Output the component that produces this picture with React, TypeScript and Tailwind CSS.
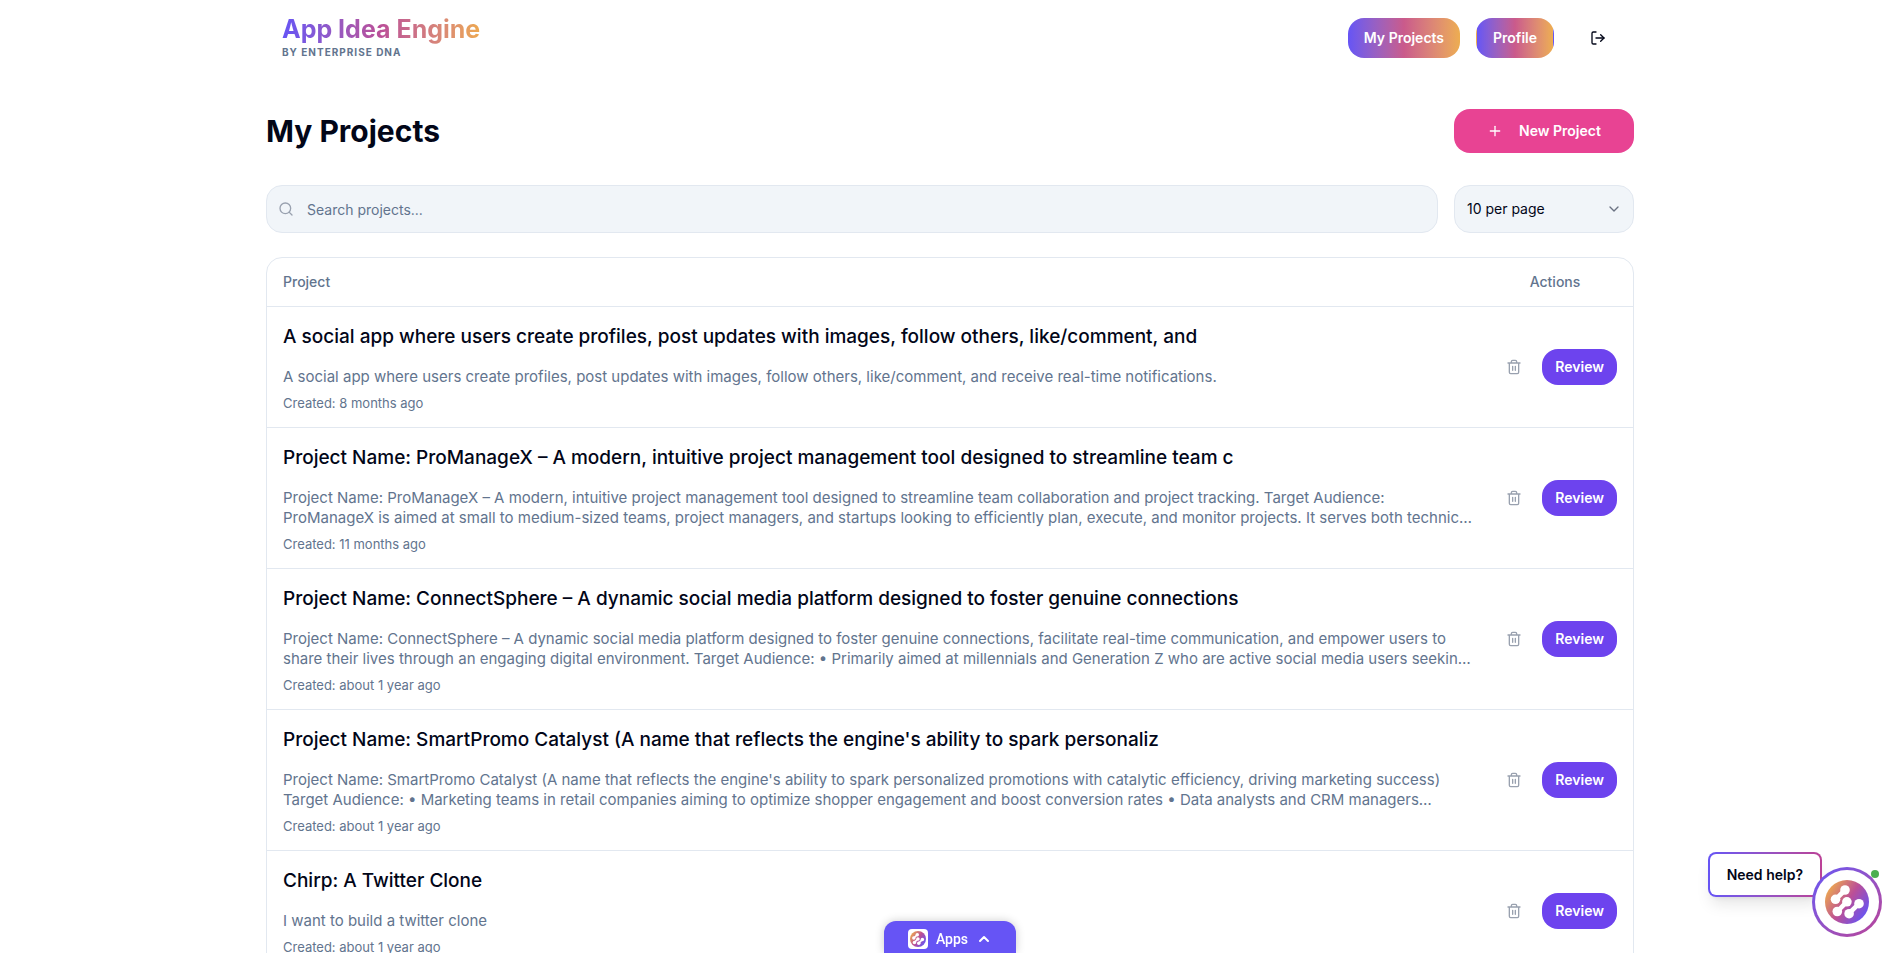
import { ChevronDown, ChevronUp, LogOut, Plus, Search } from "lucide-react";

interface Project {
	title: string;
	lines: string[];
	created: string;
}

const projects: Project[] = [
	{
		title:
			"A social app where users create profiles, post updates with images, follow others, like/comment, and",
		lines: [
			"A social app where users create profiles, post updates with images, follow others, like/comment, and receive real-time notifications.",
		],
		created: "8 months ago",
	},
	{
		title:
			"Project Name: ProManageX – A modern, intuitive project management tool designed to streamline team c",
		lines: [
			"Project Name: ProManageX – A modern, intuitive project management tool designed to streamline team collaboration and project tracking. Target Audience:",
			"ProManageX is aimed at small to medium-sized teams, project managers, and startups looking to efficiently plan, execute, and monitor projects. It serves both technic…",
		],
		created: "11 months ago",
	},
	{
		title:
			"Project Name: ConnectSphere – A dynamic social media platform designed to foster genuine connections",
		lines: [
			"Project Name: ConnectSphere – A dynamic social media platform designed to foster genuine connections, facilitate real-time communication, and empower users to",
			"share their lives through an engaging digital environment. Target Audience: • Primarily aimed at millennials and Generation Z who are active social media users seekin…",
		],
		created: "about 1 year ago",
	},
	{
		title:
			"Project Name: SmartPromo Catalyst (A name that reflects the engine's ability to spark personaliz",
		lines: [
			"Project Name: SmartPromo Catalyst (A name that reflects the engine's ability to spark personalized promotions with catalytic efficiency, driving marketing success)",
			"Target Audience: • Marketing teams in retail companies aiming to optimize shopper engagement and boost conversion rates • Data analysts and CRM managers…",
		],
		created: "about 1 year ago",
	},
	{
		title: "Chirp: A Twitter Clone",
		lines: ["I want to build a twitter clone"],
		created: "about 1 year ago",
	},
];

const TrashIcon = () => (
	<svg
		viewBox="0 0 24 24"
		className="size-4"
		fill="none"
		stroke="currentColor"
		strokeWidth="2"
		strokeLinecap="round"
		strokeLinejoin="round"
		aria-hidden="true"
	>
		<path d="M3 6h18M19 6v14a2 2 0 0 1-2 2H7a2 2 0 0 1-2-2V6M8 6V4a2 2 0 0 1 2-2h4a2 2 0 0 1 2 2v2M10 11v6M14 11v6" />
	</svg>
);

const DnaLogo = ({ id, className }: { id: string; className: string }) => (
	<svg viewBox="0 0 44 44" className={className} aria-hidden="true">
		<defs>
			<linearGradient id={id} x1="0.05" y1="0.2" x2="0.95" y2="0.8">
				<stop offset="0" stopColor="#eda84f" />
				<stop offset="0.5" stopColor="#bb4f97" />
				<stop offset="1" stopColor="#6654f5" />
			</linearGradient>
		</defs>
		<circle cx="22" cy="22" r="22" fill={`url(#${id})`} />
		<path
			d="M20 10L10.7 19.3M21.7 21.8L12.3 31.5M34 23.7L23.9 33.5"
			fill="none"
			stroke="#fff"
			strokeWidth="4.6"
		/>
		<g fill="#fff">
			<circle cx="20" cy="10" r="4.8" />
			<circle cx="10.5" cy="19.3" r="4.8" />
			<circle cx="21.9" cy="21.8" r="4.8" />
			<circle cx="12.3" cy="31.5" r="4.8" />
			<circle cx="34" cy="23.7" r="4.8" />
			<circle cx="24.1" cy="33.7" r="4.8" />
		</g>
	</svg>
);

const Header = () => (
	<header className="flex items-center justify-between px-4 pt-[15px]">
		<a href="/" className="flex flex-col">
			<span className="bg-linear-to-r from-[#6654f5] via-[#bb4f97] to-[#eda84f] bg-clip-text text-[25px] leading-[29px] font-bold text-transparent">
				App Idea Engine
			</span>
			<span className="text-[10px] leading-[17px] font-bold tracking-widest text-slate-500">
				BY ENTERPRISE DNA
			</span>
		</a>
		<nav className="flex items-center gap-4 text-sm font-semibold">
			<a
				href="/projects"
				className="flex h-10 items-center rounded-2xl bg-linear-to-r from-[#6654f5] via-[#ca5a8b] to-[#edad50] px-4 text-white"
			>
				My Projects
			</a>
			<a
				href="/profile"
				className="flex h-10 items-center rounded-2xl border border-transparent bg-linear-to-r from-[#6654f5] via-[#ca5a8b] to-[#edad50] px-4 text-white"
			>
				Profile
			</a>
			<button
				type="button"
				aria-label="Log out"
				className="ml-2 flex size-10 items-center justify-center text-slate-950"
			>
				<LogOut className="size-4" />
			</button>
		</nav>
	</header>
);

const ProjectRow = ({ project }: { project: Project }) => (
	<tr className="border-b border-slate-200">
		<td className="p-4">
			<h2 className="text-[19px] leading-7 font-medium whitespace-nowrap">
				{project.title}
			</h2>
			<p className="mt-4 text-[15px] leading-5 text-slate-500">
				{project.lines.map((line) => (
					<span key={line} className="block whitespace-nowrap">
						{line}
					</span>
				))}
			</p>
			<p className="mt-2 text-[13px] leading-4 text-slate-500">
				Created: {project.created}
			</p>
		</td>
		<td className="p-4">
			<div className="flex items-center justify-end gap-2">
				<button
					type="button"
					aria-label="Delete project"
					className="flex size-10 items-center justify-center text-gray-400"
				>
					<TrashIcon />
				</button>
				<button
					type="button"
					className="h-9 rounded-2xl bg-[#6d43ee] px-[13px] text-sm font-semibold text-white"
				>
					Review
				</button>
			</div>
		</td>
	</tr>
);

export default function App() {
	return (
		<div className="h-screen overflow-hidden bg-white pr-1 font-['Inter',sans-serif] text-slate-950">
			<div className="mx-auto max-w-[1400px] px-4">
				<Header />

				<main className="pt-12">
					<div className="flex items-center justify-between">
						<h1 className="text-3xl font-bold">My Projects</h1>
						<button
							type="button"
							className="flex h-11 w-[180px] items-center justify-center gap-4 rounded-2xl bg-[#e84393] text-sm font-semibold text-white"
						>
							<Plus className="size-4" />
							New Project
						</button>
					</div>

					<div className="mt-8 flex gap-4">
						<div className="relative flex-1">
							<Search className="absolute top-4 left-3 size-4 text-gray-400" />
							<input
								type="text"
								aria-label="Search projects"
								placeholder="Search projects..."
								className="h-12 w-full rounded-2xl border border-slate-200 bg-slate-100 pr-3 pl-10 text-sm placeholder:text-slate-500"
							/>
						</div>
						<div className="relative w-[180px]">
							<select
								aria-label="Projects per page"
								className="h-12 w-full appearance-none rounded-2xl border border-slate-200 bg-slate-100 px-3 text-sm"
							>
								<option>10 per page</option>
							</select>
							<ChevronDown className="pointer-events-none absolute top-4 right-3 size-4 text-gray-500" />
						</div>
					</div>

					<div className="mt-6 overflow-hidden rounded-2xl border border-slate-200">
						<table className="w-full table-fixed">
							<thead>
								<tr className="h-12 border-b border-slate-200 text-sm text-slate-500">
									<th className="px-4 text-left font-medium">Project</th>
									<th className="w-[156px] px-4 text-center font-medium">
										Actions
									</th>
								</tr>
							</thead>
							<tbody>
								{projects.map((project) => (
									<ProjectRow key={project.title} project={project} />
								))}
							</tbody>
						</table>
					</div>
				</main>
			</div>

			<div className="pointer-events-none fixed inset-x-0 bottom-0 flex justify-center pr-1">
				<button
					type="button"
					className="pointer-events-auto flex h-8 items-center gap-2 rounded-t-xl bg-[#6654f5] px-6 pt-1 font-['Roboto',sans-serif] text-sm font-medium text-white shadow-[0_0_10px_rgba(0,0,0,0.2)]"
				>
					<span className="rounded-sm bg-white p-0.5">
						<DnaLogo id="apps-logo" className="size-4" />
					</span>
					Apps
					<ChevronUp className="size-4" strokeWidth={3} />
				</button>
			</div>

			<div className="fixed right-[22px] bottom-4 flex items-end">
				<div className="-mr-[10px] mb-10 rounded-lg bg-linear-to-r from-[#6654f5] to-[#bb4096] p-0.5 shadow-lg">
					<p className="rounded-md bg-white px-[17px] py-[10px] text-sm leading-[21px] font-semibold">
						Need help?
					</p>
				</div>
				<button
					type="button"
					aria-label="Open help chat"
					className="relative size-[70px] rounded-full bg-linear-to-br from-[#6654f5] to-[#bb4096] p-[3px]"
				>
					<span className="flex size-16 items-center justify-center rounded-full bg-white">
						<DnaLogo id="chat-logo" className="size-11" />
					</span>
					<span className="absolute top-[3px] right-[3px] size-2 rounded-full bg-[#4caf50]" />
				</button>
			</div>
		</div>
	);
}
